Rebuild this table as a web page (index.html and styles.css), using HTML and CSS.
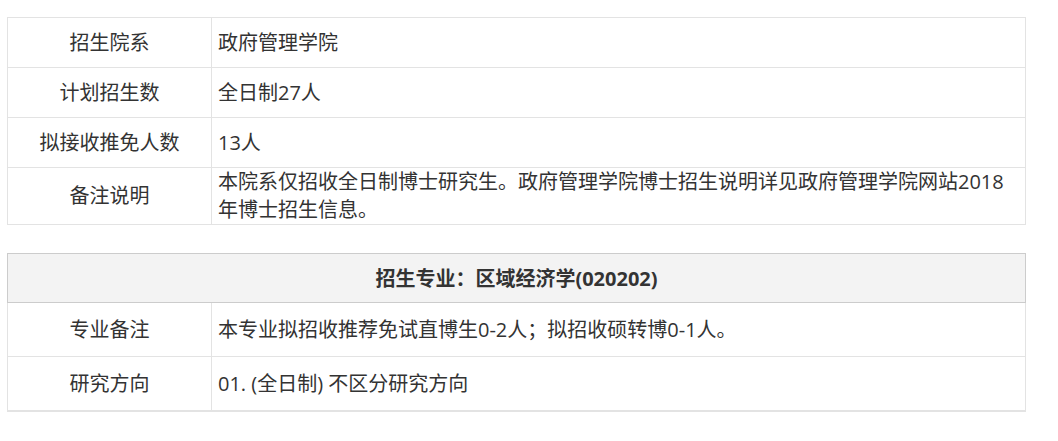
FILE: index.html
```html
<!DOCTYPE html>
<html lang="zh-CN">
<head>
<meta charset="utf-8">
<title>招生信息</title>
<link rel="stylesheet" href="styles.css">
</head>
<body>
<div class="page">
  <table class="info">
    <colgroup><col class="col-label"><col class="col-value"></colgroup>
    <tr><th class="label">招生院系</th><td class="value">政府管理学院</td></tr>
    <tr><th class="label">计划招生数</th><td class="value">全日制27人</td></tr>
    <tr><th class="label">拟接收推免人数</th><td class="value">13人</td></tr>
    <tr><th class="label">备注说明</th><td class="value">本院系仅招收全日制博士研究生。政府管理学院博士招生说明详见政府管理学院网站2018年博士招生信息。</td></tr>
  </table>

  <table class="info major">
    <colgroup><col class="col-label"><col class="col-value"></colgroup>
    <tr><th class="head" colspan="2">招生专业<span class="punct">：</span>区域经济学(020202)</th></tr>
    <tr class="tall"><th class="label">专业备注</th><td class="value">本专业拟招收推荐免试直博生0-2人<span class="punct">；</span>拟招收硕转博0-1人。</td></tr>
    <tr class="tall"><th class="label">研究方向</th><td class="value">01. (全日制) 不区分研究方向</td></tr>
  </table>
</div>
</body>
</html>
```

FILE: styles.css
```css
html, body {
  margin: 0;
  padding: 0;
  background: #ffffff;
}

.page {
  padding: 17px 0 0 7px;
  width: 1019px;
  font-family: "Open Sans", "Noto Sans CJK SC", sans-serif;
  font-size: 20px;
  color: #333333;
}

.info {
  width: 1019px;
  border-collapse: collapse;
  table-layout: fixed;
  margin: 0 0 28px 0;
}

.col-label {
  width: 204px;
}

.info th,
.info td {
  border: 1px solid #e3e3e3;
  height: 49px;
  padding: 0;
  line-height: 28px;
  vertical-align: middle;
  font-weight: normal;
}

.info .label {
  text-align: center;
}

.info .value {
  text-align: left;
  padding-left: 6px;
  padding-right: 8px;
}

.punct {
  font-family: "Noto Sans CJK TC", "Noto Sans CJK SC", sans-serif;
}

.major .head {
  background: #f3f3f3;
  border: 1px solid #cccccc;
  font-weight: bold;
  text-align: center;
  height: 48px;
}

.major .tall th,
.major .tall td {
  height: 53px;
}

.major tr:last-child th,
.major tr:last-child td {
  border-bottom: 2px solid #e3e3e3;
}
```
